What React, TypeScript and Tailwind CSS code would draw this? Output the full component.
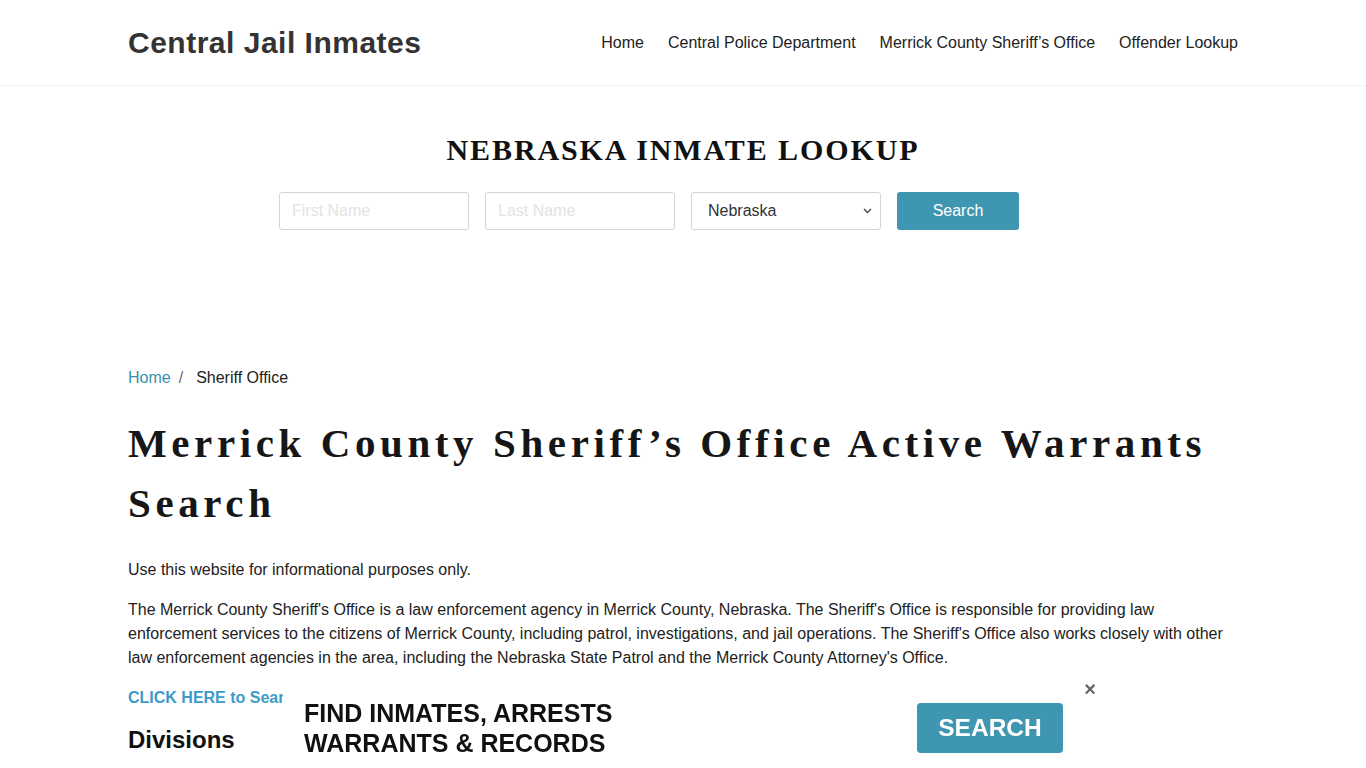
import React from "react";

export default function App() {
  const sans = { fontFamily: '"Liberation Sans", Arial, sans-serif' };
  return (
    <div className="min-h-screen bg-white text-[#222]" style={sans}>
      <header className="h-[86px] border-b border-[#f2f2f2]">
        <div className="w-[1110px] mx-auto h-full flex items-center justify-between">
          <div className="text-[30px] font-bold text-[#333] tracking-[0.5px]">Central Jail Inmates</div>
          <nav className="flex gap-6 text-[16px] text-[#222]">
            <a>Home</a>
            <a>Central Police Department</a>
            <a>Merrick County Sheriff’s Office</a>
            <a>Offender Lookup</a>
          </nav>
        </div>
      </header>

      <section className="pt-[46px] h-[254px]">
        <h2
          className="text-center text-[30px] font-bold tracking-[1.9px] text-[#111] leading-[36px]"
          style={{ fontFamily: '"Liberation Serif", "Times New Roman", serif' }}
        >
          NEBRASKA INMATE LOOKUP
        </h2>
        <div className="w-[1110px] mx-auto mt-[24px] pl-[151px] flex gap-4">
          <input
            placeholder="First Name"
            className="w-[190px] h-[38px] border border-[#d4d4d4] rounded-[3px] px-3 text-[16px] placeholder:text-[#e3e3e3]"
          />
          <input
            placeholder="Last Name"
            className="w-[190px] h-[38px] border border-[#d4d4d4] rounded-[3px] px-3 text-[16px] placeholder:text-[#e3e3e3]"
          />
          <div className="w-[190px] h-[38px] border border-[#d4d4d4] rounded-[3px] pl-4 pr-2 flex items-center justify-between text-[16px] text-[#333]">
            <span>Nebraska</span>
            <svg width="9" height="6" viewBox="0 0 9 6">
              <path d="M1 1l3.5 3.5L8 1" stroke="#444" strokeWidth="1.4" fill="none" />
            </svg>
          </div>
          <button className="w-[122px] h-[38px] bg-[#3f96b0] rounded-[3px] text-white text-[16px]">Search</button>
        </div>
      </section>

      <main className="w-[1110px] mx-auto">
        <div className="pt-[26px] text-[16px] flex items-center leading-6">
          <a className="text-[#3b8fab]">Home</a>
          <span className="text-[#666] ml-[8px] mr-[13px]">/</span>
          <span className="text-[#222]">Sheriff Office</span>
        </div>
        <h1
          className="mt-[23px] text-[41px] font-bold leading-[60px] text-[#161616] tracking-[4.6px]"
          style={{ fontFamily: '"Liberation Serif", "Times New Roman", serif' }}
        >
          Merrick County Sheriff’s Office Active Warrants Search
        </h1>
        <p className="mt-[25px] text-[16px] leading-6">Use this website for informational purposes only.</p>
        <p className="mt-[16px] text-[16px] leading-6">
          The Merrick County Sheriff's Office is a law enforcement agency in Merrick County, Nebraska. The Sheriff's Office is responsible for providing law enforcement services to the citizens of Merrick County, including patrol, investigations, and jail operations. The Sheriff's Office also works closely with other law enforcement agencies in the area, including the Nebraska State Patrol and the Merrick County Attorney's Office.
        </p>
        <p className="mt-[16px] text-[16px] leading-6 font-bold text-[#3d9bc9]">
          CLICK HERE to Search Merrick County Sheriff’s Office Active Warrants
        </p>
        <h3 className="mt-[16px] text-[24px] font-bold leading-7 text-[#111]">Divisions</h3>
        <p className="mt-3 text-[16px] leading-6">The Merrick County Sheriff's Office is divided into several divisions.</p>
      </main>

      <div className="fixed bottom-0 left-[283px] w-[800px] h-[93px] bg-white">
        <div className="relative w-full h-full flex items-center justify-between pl-[21px] pr-[20px]">
          <div className="text-[25px] font-bold leading-[30px] text-[#111] pt-[12px]">
            FIND INMATES, ARRESTS
            <br />
            WARRANTS &amp; RECORDS
          </div>
          <button className="w-[146px] h-[50px] bg-[#3f96b0] rounded-[4px] text-white text-[24.5px] font-bold mt-[12px] pt-[1px]">
            SEARCH
          </button>
          <span className="absolute right-[-13px] top-[4px] text-[20px] leading-5 text-[#666] font-bold">×</span>
        </div>
      </div>
    </div>
  );
}
